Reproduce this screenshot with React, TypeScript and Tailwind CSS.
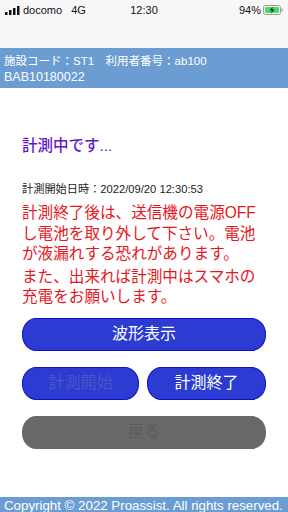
import React from "react"

const font = { fontFamily: '"Liberation Sans", "Noto Sans CJK JP", sans-serif' }

const StatusBar: React.FC = () => (
  <div className="h-[20px] flex items-center px-[5px] text-[11px] text-[#111] relative">
    <div className="flex items-center gap-[3px]">
      <svg width="15" height="9" viewBox="0 0 15 9">
        <rect x="0" y="6" width="2.5" height="3" fill="#111" />
        <rect x="4" y="4" width="2.5" height="5" fill="#111" />
        <rect x="8" y="2" width="2.5" height="7" fill="#111" />
        <rect x="12" y="0" width="2.5" height="9" fill="#111" />
      </svg>
      <span>docomo</span>
      <span className="ml-[6px]">4G</span>
    </div>
    <div className="absolute left-0 right-0 text-center text-[11px]">12:30</div>
    <div className="ml-auto flex items-center gap-[2px]">
      <span>94%</span>
      <svg width="20" height="10" viewBox="0 0 20 10">
        <rect x="0.5" y="0.5" width="17" height="9" rx="2" fill="none" stroke="#9a9a9a" />
        <rect x="2" y="2" width="14" height="6" rx="1" fill="#4cd964" />
        <rect x="18.5" y="3.5" width="1.2" height="3" fill="#9a9a9a" />
        <path d="M10 1.5 L6.5 5.5 H9 L8 8.5 L11.5 4.5 H9 Z" fill="#111" />
      </svg>
    </div>
  </div>
)

const Button: React.FC<{ label: string; className?: string; textClass?: string }> = ({ label, className = "", textClass = "text-white" }) => (
  <div
    className={`h-[33px] flex items-center justify-center rounded-[14px/16px] text-[16px] ${className} ${textClass}`}
  >
    {label}
  </div>
)

export default function App() {
  return (
    <div className="w-[288px] h-[512px] overflow-hidden flex flex-col bg-white" style={font}>
      <div className="bg-[#f7f7f7] h-[48px]">
        <StatusBar />
      </div>
      <div className="bg-[#6c9dd2] text-white leading-[16px] px-[4px] pt-[5px] h-[40px]">
        <div className="text-[11.5px]">施設コード：ST1　利用者番号：ab100</div>
        <div className="text-[12.5px]">BAB10180022</div>
      </div>
      <div className="px-[22px] flex flex-col">
        <h1 className="mt-[48px] text-[15.5px] leading-[20px] font-medium text-[#6418c8]">計測中です...</h1>
        <div className="mt-[25px] text-[11.2px] leading-[16px] text-[#222]">計測開始日時：2022/09/20 12:30:53</div>
        <p className="mt-[6px] text-[15.6px] leading-[20.5px] text-[#e8151d]">
          計測終了後は、送信機の電源OFFし電池を取り外して下さい。電池が液漏れする恐れがあります。
        </p>
        <p className="mt-[2px] text-[15.6px] leading-[20.5px] text-[#e8151d]">
          また、出来れば計測中はスマホの充電をお願いします。
        </p>
        <div className="mt-[10px] flex flex-col gap-[16px]">
          <Button label="波形表示" className="bg-[#2c3cd2] border border-[#1010cc]" />
          <div className="flex gap-[8px]">
            <Button label="計測開始" className="w-[117px] bg-[#2c3cd2] border border-[#1010cc]" textClass="text-[#4b55c4]" />
            <Button label="計測終了" className="flex-1 bg-[#2c3cd2] border border-[#1010cc]" />
          </div>
          <Button label="戻る" className="bg-[#686868]" textClass="text-[#5c5c5c]" />
        </div>
      </div>
      <div className="mt-auto bg-[#6c9dd2] text-white text-[13.3px] leading-[17px] px-[4px] h-[15px] overflow-hidden whitespace-nowrap">
        Copyright © 2022 Proassist. All rights reserved.
      </div>
    </div>
  )
}
